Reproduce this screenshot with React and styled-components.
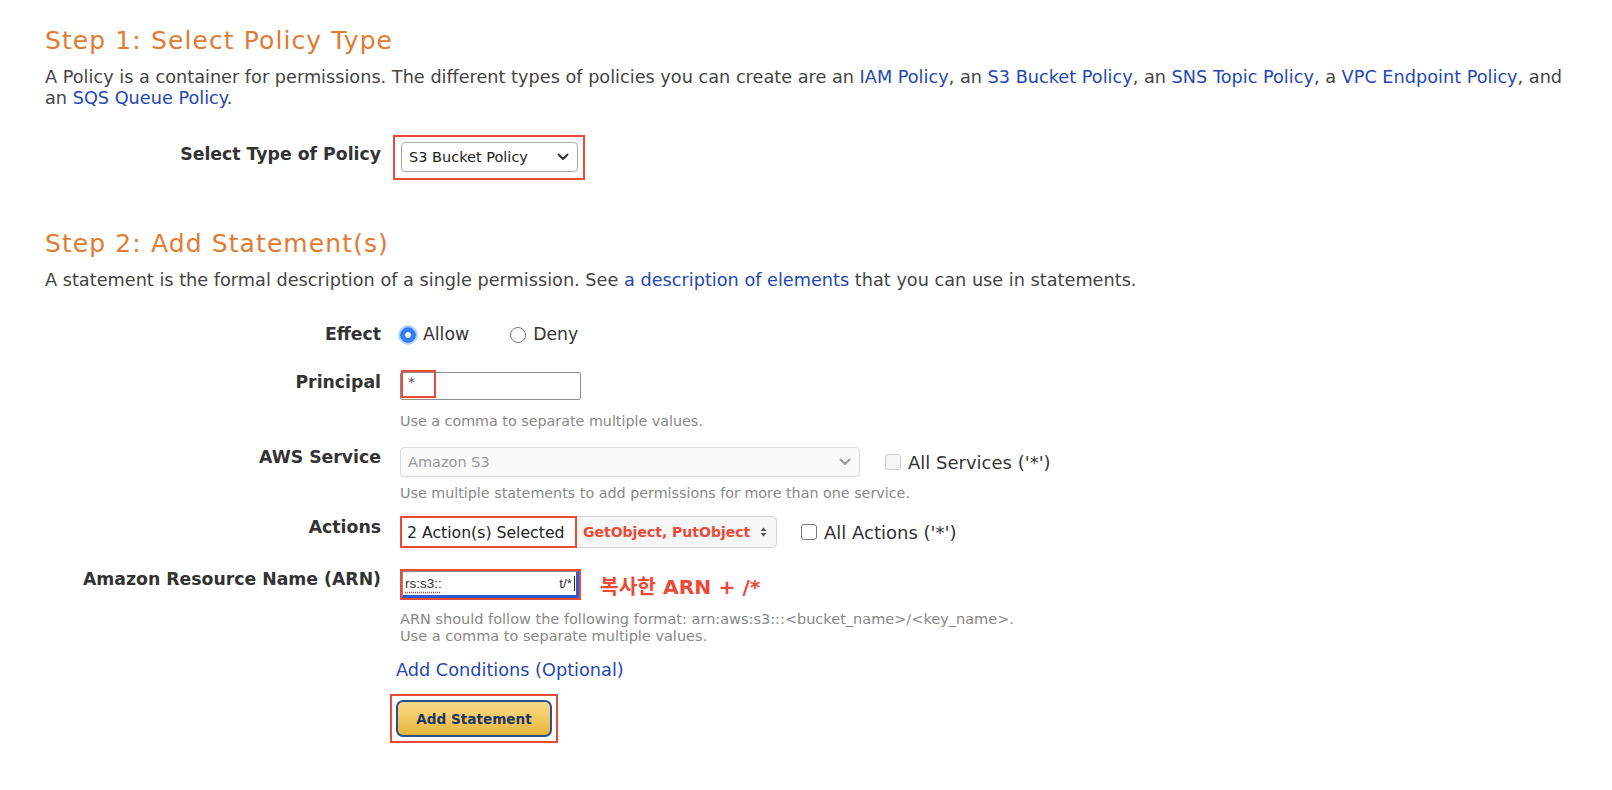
import React from "react";
import styled, { createGlobalStyle } from "styled-components";

const GlobalStyle = createGlobalStyle`
  html, body { margin: 0; padding: 0; background: #fff; }
  body { font-family: "DejaVu Sans", Verdana, sans-serif; color: #444; }
`;

const Page = styled.div`
  padding: 26px 0 40px 45px;
`;

const StepTitle = styled.h2`
  margin: ${(p) => p.$mt || 0}px 0 0;
  font-weight: normal;
  font-size: 25px;
  line-height: 30px;
  letter-spacing: 1.1px;
  color: #e07c32;
`;

const Intro = styled.p`
  margin: ${(p) => p.$mt || 10}px 0 0;
  font-size: 17.7px;
  line-height: 21px;
  color: #444;
  white-space: nowrap;
`;

const A = styled.a`
  color: #2447b2;
  text-decoration: none;
`;

const Row = styled.div`
  display: grid;
  grid-template-columns: 336px 1fr;
  column-gap: 19px;
  align-items: start;
  margin-top: ${(p) => p.$mt || 0}px;
`;

const Label = styled.div`
  text-align: right;
  font-weight: bold;
  font-size: 17.3px;
  line-height: 21px;
  color: #333;
  padding-top: ${(p) => p.$pt || 0}px;
`;

const Field = styled.div`
  display: flex;
  flex-direction: column;
  align-items: flex-start;
`;

const Line = styled.div`
  display: flex;
  align-items: center;
  gap: ${(p) => p.$gap || 0}px;
`;

const Hint = styled.div`
  font-size: ${(p) => p.$size || 14.3}px;
  line-height: ${(p) => p.$lh || 17}px;
  color: #888;
  margin-top: ${(p) => p.$mt || 0}px;
`;

const Outline = styled.div`
  border: 2px solid #ea4a36;
  padding: ${(p) => p.$pad || "0"};
  margin-left: ${(p) => p.$ml || 0}px;
  margin-top: ${(p) => p.$mt || 0}px;
  display: inline-flex;
`;

const SelectBox = styled.div`
  display: flex;
  align-items: center;
  justify-content: space-between;
  box-sizing: border-box;
  width: ${(p) => p.$w}px;
  height: 30px;
  padding: 0 8px 0 7px;
  border: 1px solid ${(p) => (p.$disabled ? "#dcdcdc" : "#a9a9a9")};
  border-radius: 4px;
  background: ${(p) => (p.$disabled ? "#fafafa" : "#fff")};
  color: ${(p) => (p.$disabled ? "#999" : "#222")};
  font-size: 14.5px;
`;

const Chevron = ({ color = "#333" }) => (
  <svg width="12" height="8" viewBox="0 0 12 8">
    <path d="M1.5 1.5 L6 6 L10.5 1.5" fill="none" stroke={color} strokeWidth="2" strokeLinecap="round" strokeLinejoin="round" />
  </svg>
);

const UpDown = () => (
  <svg width="7" height="10" viewBox="0 0 7 10">
    <path d="M3.5 0.5 L6.5 4 H0.5 Z M3.5 9.5 L6.5 6 H0.5 Z" fill="#555" />
  </svg>
);

const RadioGroup = styled.div`
  display: flex;
  align-items: center;
  gap: 41px;
  font-size: 17.3px;
  line-height: 21px;
  color: #333;
`;

const RadioOpt = styled.label`
  display: flex;
  align-items: center;
  gap: 7px;
`;

const RadioDot = styled.span`
  box-sizing: border-box;
  width: 16px;
  height: 16px;
  border-radius: 50%;
  border: ${(p) => (p.$on ? "1px solid #2f7cf6" : "1px solid #777")};
  background: ${(p) => (p.$on ? "radial-gradient(circle, #fff 0 2.6px, #2f7cf6 3.2px)" : "#fff")};
  box-shadow: ${(p) => (p.$on ? "0 0 0 2px #b9d3fb" : "none")};
`;

const TextInput = styled.div`
  box-sizing: border-box;
  width: 181px;
  height: 28px;
  border: 1px solid #8e8e8e;
  border-radius: 2px;
  background: #fff;
  position: relative;
`;

const Star = styled.div`
  position: absolute;
  left: 0;
  top: -3px;
  width: 35px;
  height: 28px;
  box-sizing: border-box;
  border: 2px solid #ea4a36;
  padding: 2px 0 0 5px;
  font-size: 14px;
  color: #555;
`;

const Check = styled.label`
  display: flex;
  align-items: center;
  gap: 7px;
  font-size: 18px;
  color: #333;
`;

const Box = styled.span`
  box-sizing: border-box;
  width: 16px;
  height: 16px;
  border-radius: 3px;
  border: 1px solid ${(p) => (p.$disabled ? "#ccc" : "#777")};
  background: ${(p) => (p.$disabled ? "#f6f6f6" : "#fff")};
`;

const ActionsSelect = styled.div`
  display: flex;
  align-items: center;
  box-sizing: border-box;
  width: 377px;
  height: 32px;
  border: 1px solid #d2d2d2;
  border-radius: 5px;
  background: #f7f7f7;
  padding: 0 9px 0 0;
`;

const ActionsSel = styled.div`
  box-sizing: border-box;
  width: 177px;
  height: 32px;
  margin: -1px 0 -1px -1px;
  padding: 5px 0 0 5px;
  border: 2px solid #ea4a36;
  background: #fff;
  font-size: 15.7px;
  color: #222;
  white-space: nowrap;
`;

const RedText = styled.span`
  color: #ea4a36;
  font-weight: bold;
  font-size: ${(p) => p.$size || 14}px;
  font-family: "DejaVu Sans", "Noto Sans CJK KR", sans-serif;
`;

const ActionsText = styled(RedText)`
  flex: 1;
  padding-left: 6px;
`;

const ArnInput = styled.div`
  box-sizing: border-box;
  width: 177px;
  height: 27px;
  border: 1px solid #8e8e8e;
  border-right: 3px solid #2d5bd6;
  border-bottom: 3px solid #2d5bd6;
  background: #fff;
  display: flex;
  align-items: center;
  justify-content: space-between;
  padding: 0 1px 0 2px;
  font-size: 13.5px;
  color: #333;
  font-family: "Liberation Sans Narrow", "Liberation Sans", sans-serif;
`;

const Squiggle = styled.span`
  text-decoration: underline dotted #e53935;
  text-underline-offset: 4px;
`;

const Caret = styled.span`
  border-right: 1px solid #222;
  padding-right: 2px;
`;

const CondLink = styled(A)`
  margin: 16px 0 0 -4px;
  font-size: 17.7px;
  line-height: 21px;
`;

const Button = styled.button`
  box-sizing: border-box;
  width: 156px;
  height: 37px;
  border: 2px solid #2f4f8f;
  border-radius: 7px;
  background: linear-gradient(#f8dc86, #e6b53c);
  color: #1f3566;
  font-family: "DejaVu Sans", sans-serif;
  font-weight: bold;
  font-size: 13.6px;
  cursor: pointer;
`;

export default function App() {
  return (
    <Page>
      <GlobalStyle />
      <StepTitle>Step 1: Select Policy Type</StepTitle>
      <Intro $mt={11}>
        A Policy is a container for permissions. The different types of policies you can create are an{" "}
        <A href="#">IAM Policy</A>, an <A href="#">S3 Bucket Policy</A>, an <A href="#">SNS Topic Policy</A>, a{" "}
        <A href="#">VPC Endpoint Policy</A>, and
        <br />
        an <A href="#">SQS Queue Policy</A>.
      </Intro>

      <Row $mt={26}>
        <Label $pt={9}>Select Type of Policy</Label>
        <Field>
          <Outline $pad="5px 5px 6px 6px" $ml={-7}>
            <SelectBox $w={177}>
              S3 Bucket Policy
              <Chevron />
            </SelectBox>
          </Outline>
        </Field>
      </Row>

      <StepTitle $mt={49}>Step 2: Add Statement(s)</StepTitle>
      <Intro $mt={11}>
        A statement is the formal description of a single permission. See <A href="#">a description of elements</A> that
        you can use in statements.
      </Intro>

      <Row $mt={33}>
        <Label>Effect</Label>
        <Field>
          <RadioGroup>
            <RadioOpt>
              <RadioDot $on />
              Allow
            </RadioOpt>
            <RadioOpt>
              <RadioDot />
              Deny
            </RadioOpt>
          </RadioGroup>
        </Field>
      </Row>

      <Row $mt={27}>
        <Label>Principal</Label>
        <Field>
          <TextInput>
            <Star>*</Star>
          </TextInput>
          <Hint $mt={13}>Use a comma to separate multiple values.</Hint>
        </Field>
      </Row>

      <Row $mt={17}>
        <Label>AWS Service</Label>
        <Field>
          <Line $gap={25}>
            <SelectBox $w={460} $disabled>
              Amazon S3
              <Chevron color="#999" />
            </SelectBox>
            <Check>
              <Box $disabled />
              All Services ('*')
            </Check>
          </Line>
          <Hint $mt={8}>Use multiple statements to add permissions for more than one service.</Hint>
        </Field>
      </Row>

      <Row $mt={14}>
        <Label $pt={1}>Actions</Label>
        <Field>
          <Line $gap={24}>
            <ActionsSelect>
              <ActionsSel>2 Action(s) Selected</ActionsSel>
              <ActionsText>GetObject, PutObject</ActionsText>
              <UpDown />
            </ActionsSelect>
            <Check>
              <Box />
              All Actions ('*')
            </Check>
          </Line>
        </Field>
      </Row>

      <Row $mt={21}>
        <Label>Amazon Resource Name (ARN)</Label>
        <Field>
          <Line $gap={19}>
            <Outline>
              <ArnInput>
                <Squiggle>rs:s3::</Squiggle>
                <Caret>t/*</Caret>
              </ArnInput>
            </Outline>
            <RedText $size={20.3}>복사한 ARN + /*</RedText>
          </Line>
          <Hint $mt={11} $lh={16.5} $size={14.5}>
            ARN should follow the following format: arn:aws:s3:::&lt;bucket_name&gt;/&lt;key_name&gt;.
            <br />
            Use a comma to separate multiple values.
          </Hint>
          <CondLink href="#">Add Conditions (Optional)</CondLink>
          <Outline $pad="4px" $ml={-10} $mt={13}>
            <Button>Add Statement</Button>
          </Outline>
        </Field>
      </Row>
    </Page>
  );
}
